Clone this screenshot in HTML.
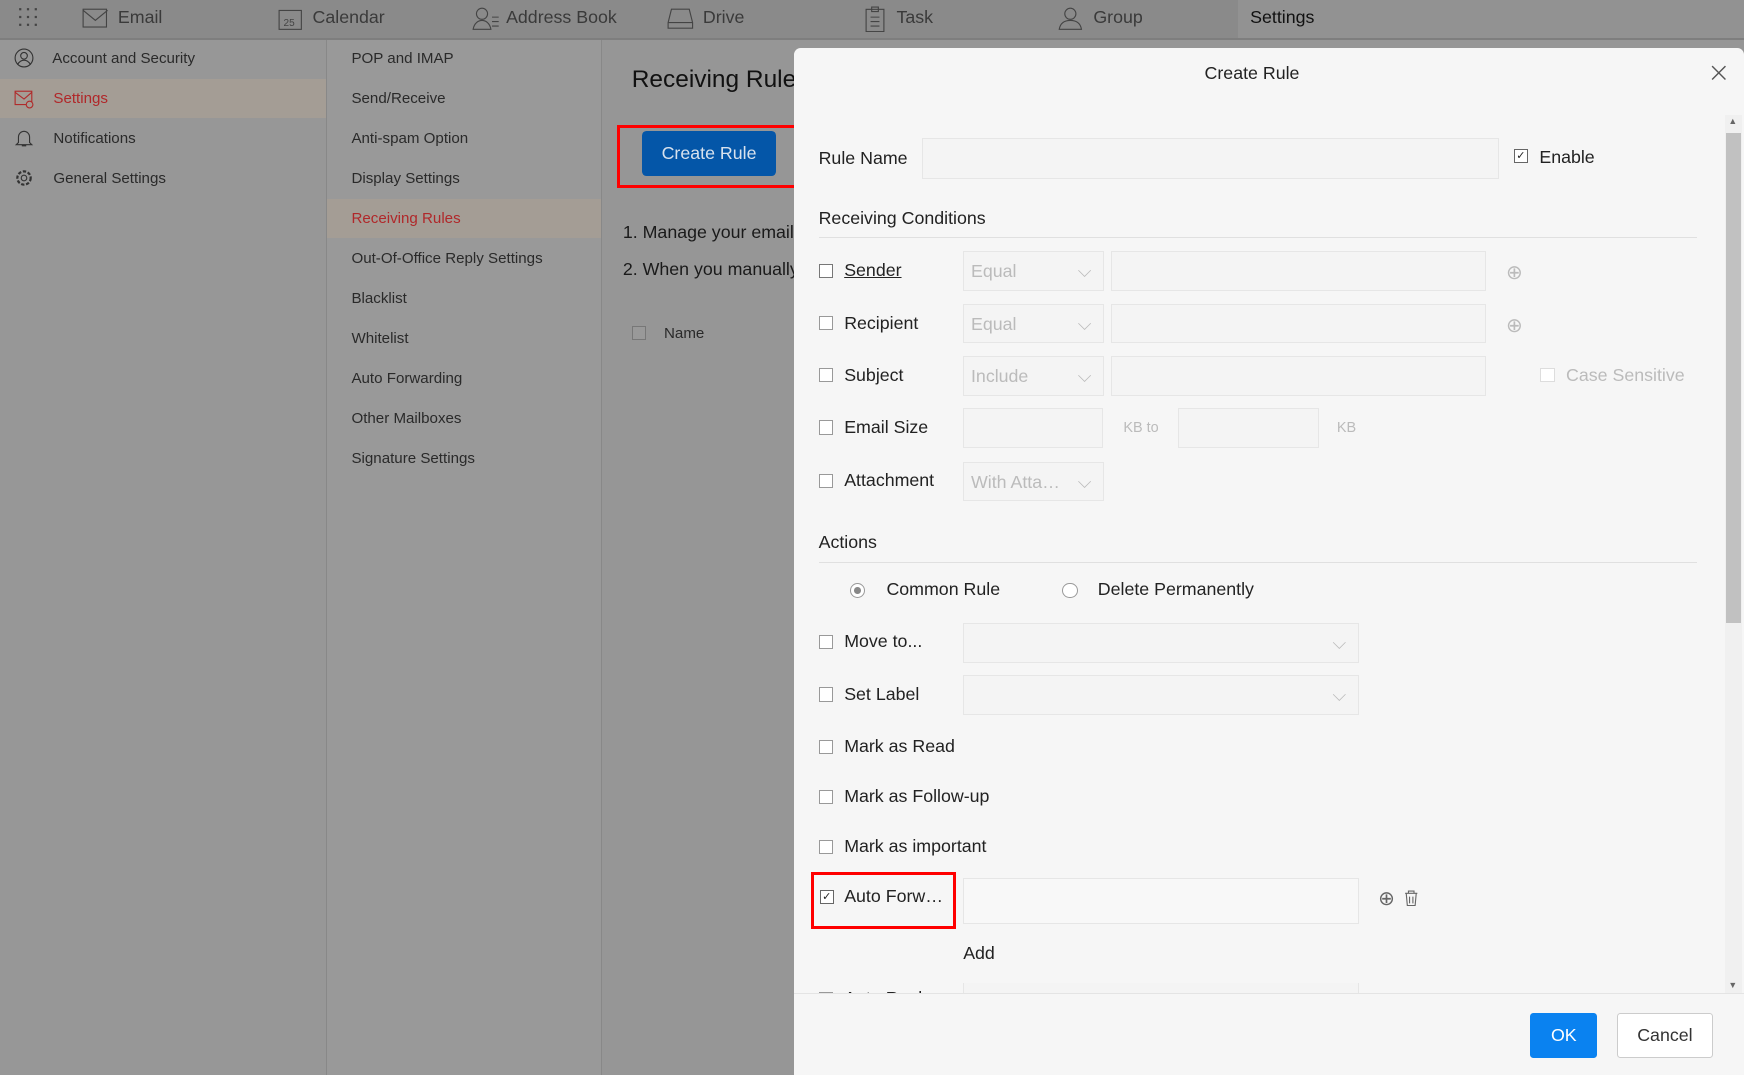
<!DOCTYPE html>
<html><head><meta charset="utf-8"><style>
html,body{margin:0;padding:0;overflow:hidden}
body{width:1744px;height:1075px;background:#969696;font-family:"Liberation Sans",sans-serif}
#w{zoom:1.11224;width:1568px;height:967px;position:relative;color:#222}
.a{position:absolute;white-space:nowrap}
.top{position:absolute;left:0;top:0;width:1568px;height:34px;background:#8a8a8a;border-bottom:2px solid #7e7e7e}
.tab{position:absolute;top:6px;font-size:16px;color:#3a3a3a}
.side{font-size:13.6px;color:#2a2a2a}
.cb{position:absolute;width:11px;height:11px;border:1px solid #999;background:#fff}
.lab{font-size:16px;color:#222}
.inp{position:absolute;border:1px solid #e6e6e6;background:#f4f4f4;height:34px}
.sel{color:#bbb;font-size:16px}
.gr{color:#bbb}
</style></head><body><div id="w">
<div class="top"></div>
<div class="a" style="left:1113px;top:0;width:455px;height:34px;background:#929292"></div>
<svg class="a" style="left:16px;top:6px" width="20" height="20"><g fill="#444"><rect x="1" y="1" width="2" height="2"/><rect x="8" y="1" width="2" height="2"/><rect x="15" y="1" width="2" height="2"/><rect x="1" y="8" width="2" height="2"/><rect x="8" y="8" width="2" height="2"/><rect x="15" y="8" width="2" height="2"/><rect x="1" y="15" width="2" height="2"/><rect x="8" y="15" width="2" height="2"/><rect x="15" y="15" width="2" height="2"/></g></svg>
<svg class="a" style="left:74px;top:6px" width="24" height="20"><rect x="1" y="2" width="21" height="16" fill="none" stroke="#444"/><path d="M1 3l11 9 11-9" fill="none" stroke="#444"/></svg>
<div class="tab" style="left:106px">Email</div>
<svg class="a" style="left:250px;top:5px" width="22" height="22"><rect x="1" y="4" width="20" height="17" fill="none" stroke="#444"/><text x="5" y="18" font-size="9" fill="#444" font-family="Liberation Sans">25</text></svg>
<div class="tab" style="left:281px">Calendar</div>
<svg class="a" style="left:424px;top:5px" width="26" height="22"><circle cx="9" cy="7" r="5" fill="none" stroke="#444"/><path d="M1 21c1-6 5-8 8-8s7 2 8 8z" fill="none" stroke="#444"/><path d="M18 10h6M18 14h6M18 18h6" stroke="#444"/></svg>
<div class="tab" style="left:455px">Address Book</div>
<svg class="a" style="left:600px;top:6px" width="24" height="20"><path d="M4 2h16l3 12v5H1v-5z M1 14h22" fill="none" stroke="#444"/></svg>
<div class="tab" style="left:632px">Drive</div>
<svg class="a" style="left:778px;top:5px" width="18" height="24"><rect x="1" y="3" width="16" height="20" fill="none" stroke="#444"/><path d="M5 10h8M5 14h8M5 18h8M6 1h6v4H6z" fill="none" stroke="#444"/></svg>
<div class="tab" style="left:806px">Task</div>
<svg class="a" style="left:950px;top:5px" width="26" height="22"><circle cx="12" cy="7" r="5" fill="none" stroke="#444"/><path d="M2 21c1-6 5-8 10-8s9 2 10 8z" fill="none" stroke="#444"/></svg>
<div class="tab" style="left:983px">Group</div>
<div class="tab" style="left:1124px;color:#111">Settings</div>

<div class="a" style="left:0;top:36px;width:293px;height:931px;background:#979797;border-right:1px solid #888"></div>
<div class="a" style="left:0;top:71px;width:293px;height:35px;background:#a49d95"></div>
<svg class="a" style="left:13px;top:43px" width="18" height="18"><circle cx="9" cy="9" r="8" fill="none" stroke="#333"/><circle cx="9" cy="7" r="3" fill="none" stroke="#333"/><path d="M3 15c2-3 4-4 6-4s4 1 6 4" fill="none" stroke="#333"/></svg>
<div class="a side" style="left:47px;top:45px">Account and Security</div>
<svg class="a" style="left:13px;top:80px" width="18" height="18"><rect x="1" y="2" width="15" height="12" fill="none" stroke="#b02a2a"/><path d="M1 3l8 6 7-6" fill="none" stroke="#b02a2a"/><circle cx="14" cy="14" r="3" fill="#a49d95" stroke="#b02a2a"/></svg>
<div class="a side" style="left:48px;top:81px;color:#b0282a">Settings</div>
<svg class="a" style="left:13px;top:115px" width="18" height="18"><path d="M4 13V8a5 5 0 0 1 10 0v5l2 2H2zM7 16h4" fill="none" stroke="#333"/></svg>
<div class="a side" style="left:48px;top:117px">Notifications</div>
<svg class="a" style="left:13px;top:151px" width="18" height="18"><circle cx="9" cy="9" r="6" fill="none" stroke="#333" stroke-dasharray="3 1.5" stroke-width="2"/><circle cx="9" cy="9" r="2.5" fill="none" stroke="#333"/></svg>
<div class="a side" style="left:48px;top:153px">General Settings</div>

<div class="a" style="left:294px;top:36px;width:246px;height:931px;background:#999;border-right:1px solid #888"></div>
<div class="a" style="left:294px;top:179px;width:246px;height:35px;background:#a49d95"></div>
<div class="a side" style="left:316px;top:45px">POP and IMAP</div>
<div class="a side" style="left:316px;top:81px">Send/Receive</div>
<div class="a side" style="left:316px;top:117px">Anti-spam Option</div>
<div class="a side" style="left:316px;top:153px">Display Settings</div>
<div class="a side" style="left:316px;top:189px;color:#b0282a">Receiving Rules</div>
<div class="a side" style="left:316px;top:225px">Out-Of-Office Reply Settings</div>
<div class="a side" style="left:316px;top:261px">Blacklist</div>
<div class="a side" style="left:316px;top:297px">Whitelist</div>
<div class="a side" style="left:316px;top:333px">Auto Forwarding</div>
<div class="a side" style="left:316px;top:369px">Other Mailboxes</div>
<div class="a side" style="left:316px;top:405px">Signature Settings</div>

<div class="a" style="left:568px;top:59px;font-size:22px;color:#111">Receiving Rule</div>
<div class="a" style="left:555px;top:112px;width:156px;height:52px;border:3px solid #f00"></div>
<div class="a" style="left:577px;top:118px;width:121px;height:40px;background:#0456a8;border-radius:4px;color:#d8e2ee;font-size:16px;text-align:center;line-height:40px">Create Rule</div>
<div class="a" style="left:560px;top:200px;font-size:16px;color:#1a1a1a">1. Manage your emails</div>
<div class="a" style="left:560px;top:233px;font-size:16px;color:#1a1a1a">2. When you manually</div>
<div class="cb" style="left:568px;top:293px;background:#999;border-color:#777"></div>
<div class="a side" style="left:597px;top:292px">Name</div>

<div class="a" style="left:714px;top:43px;width:854px;height:924px;background:#f6f6f6;border-radius:6px 6px 0 0"></div>
<div class="a" style="left:1083px;top:57px;font-size:16px;color:#222">Create Rule</div>
<svg class="a" style="left:1538px;top:58px" width="14" height="14"><path d="M1 1l12 12M13 1L1 13" stroke="#555" stroke-width="1.3"/></svg>
<div class="a" style="left:1551px;top:103px;width:15px;height:790px;background:#f0f0f0"></div>
<div class="a" style="left:1552px;top:120px;width:13px;height:440px;background:#c1c1c1"></div>
<div class="a" style="left:1554px;top:104px;font-size:8px;color:#666">▲</div>
<div class="a" style="left:1554px;top:881px;font-size:8px;color:#666">▼</div>

<div class="a lab" style="left:736px;top:133px">Rule Name</div>
<div class="inp" style="left:829px;top:124px;width:517px;height:35px"></div>
<div class="cb" style="left:1361px;top:134px;border-color:#666;font-size:10px;line-height:11px;text-align:center">✓</div>
<div class="a lab" style="left:1384px;top:132px">Enable</div>
<div class="a lab" style="left:736px;top:187px">Receiving Conditions</div>
<div class="a" style="left:736px;top:213px;width:790px;height:1px;background:#e0e0e0"></div>

<div class="cb" style="left:736px;top:237px;border-color:#777"></div><div class="a lab" style="left:759px;top:234px;text-decoration:underline">Sender</div>
<div class="inp" style="left:866px;top:226px;width:125px"></div><div class="a sel" style="left:873px;top:235px">Equal</div><div class="a gr" style="left:969px;top:235px">⌵</div>
<div class="inp" style="left:999px;top:226px;width:335px"></div><div class="a gr" style="left:1354px;top:234px;font-size:18px">⊕</div>

<div class="cb" style="left:736px;top:284px"></div><div class="a lab" style="left:759px;top:281px">Recipient</div>
<div class="inp" style="left:866px;top:273px;width:125px"></div><div class="a sel" style="left:873px;top:282px">Equal</div><div class="a gr" style="left:969px;top:282px">⌵</div>
<div class="inp" style="left:999px;top:273px;width:335px"></div><div class="a gr" style="left:1354px;top:281px;font-size:18px">⊕</div>

<div class="cb" style="left:736px;top:331px"></div><div class="a lab" style="left:759px;top:328px">Subject</div>
<div class="inp" style="left:866px;top:320px;width:125px"></div><div class="a sel" style="left:873px;top:329px">Include</div><div class="a gr" style="left:969px;top:329px">⌵</div>
<div class="inp" style="left:999px;top:320px;width:335px"></div>
<div class="cb" style="left:1385px;top:331px;border-color:#ddd"></div><div class="a sel" style="left:1408px;top:328px">Case Sensitive</div>

<div class="cb" style="left:736px;top:378px"></div><div class="a lab" style="left:759px;top:375px">Email Size</div>
<div class="inp" style="left:866px;top:367px;width:124px"></div><div class="a gr" style="left:1010px;top:378px;font-size:13px">KB to</div>
<div class="inp" style="left:1059px;top:367px;width:125px"></div><div class="a gr" style="left:1202px;top:378px;font-size:13px">KB</div>

<div class="cb" style="left:736px;top:426px"></div><div class="a lab" style="left:759px;top:423px">Attachment</div>
<div class="inp" style="left:866px;top:415px;width:125px"></div><div class="a sel" style="left:873px;top:424px">With Atta…</div><div class="a gr" style="left:969px;top:424px">⌵</div>

<div class="a lab" style="left:736px;top:478px">Actions</div>
<div class="a" style="left:736px;top:505px;width:790px;height:1px;background:#e0e0e0"></div>
<div class="a" style="left:764px;top:524px;width:12px;height:12px;border:1px solid #999;border-radius:50%;background:#fff"></div><div class="a" style="left:768px;top:528px;width:6px;height:6px;border-radius:50%;background:#888"></div>
<div class="a lab" style="left:797px;top:521px">Common Rule</div>
<div class="a" style="left:955px;top:524px;width:12px;height:12px;border:1px solid #999;border-radius:50%;background:#fff"></div>
<div class="a lab" style="left:987px;top:521px">Delete Permanently</div>

<div class="cb" style="left:736px;top:571px"></div><div class="a lab" style="left:759px;top:567px">Move to...</div>
<div class="inp" style="left:866px;top:560px;width:354px"></div><div class="a gr" style="left:1198px;top:569px">⌵</div>
<div class="cb" style="left:736px;top:618px"></div><div class="a lab" style="left:759px;top:615px">Set Label</div>
<div class="inp" style="left:866px;top:607px;width:354px"></div><div class="a gr" style="left:1198px;top:616px">⌵</div>
<div class="cb" style="left:736px;top:665px"></div><div class="a lab" style="left:759px;top:662px">Mark as Read</div>
<div class="cb" style="left:736px;top:710px"></div><div class="a lab" style="left:759px;top:707px">Mark as Follow-up</div>
<div class="cb" style="left:736px;top:755px"></div><div class="a lab" style="left:759px;top:752px">Mark as important</div>
<div class="a" style="left:729px;top:784px;width:125px;height:46px;border:3px solid #f00"></div>
<div class="cb" style="left:737px;top:800px;border-color:#666;font-size:10px;line-height:11px;text-align:center">✓</div>
<div class="a lab" style="left:759px;top:797px">Auto Forw…</div>
<div class="inp" style="left:866px;top:789px;width:354px;height:40px;background:#f8f8f8"></div>
<div class="a" style="left:1239px;top:797px;font-size:18px;color:#666">⊕</div>
<svg class="a" style="left:1262px;top:800px" width="13" height="15"><path d="M1 3h11M4 3V1h5v2M2 3l1 11h7l1-11M5 6v6M8 6v6" fill="none" stroke="#666"/></svg>
<div class="a lab" style="left:866px;top:848px">Add</div>
<div class="a" style="left:714px;top:884px;width:837px;height:9px;overflow:hidden">
<div class="cb" style="left:22px;top:8px"></div>
<div class="a lab" style="left:45px;top:4px">Auto Reply</div>
<div class="inp" style="left:152px;top:-2px;width:354px"></div></div>
<div class="a" style="left:714px;top:893px;width:854px;height:1px;background:#e4e4e4"></div>
<div class="a" style="left:1376px;top:911px;width:60px;height:40px;background:#0a82f0;border-radius:3px;color:#fff;font-size:16px;text-align:center;line-height:40px">OK</div>
<div class="a" style="left:1454px;top:911px;width:84px;height:38px;border:1px solid #ccc;background:#fff;border-radius:3px;color:#333;font-size:16px;text-align:center;line-height:38px">Cancel</div>
</div></body></html>
